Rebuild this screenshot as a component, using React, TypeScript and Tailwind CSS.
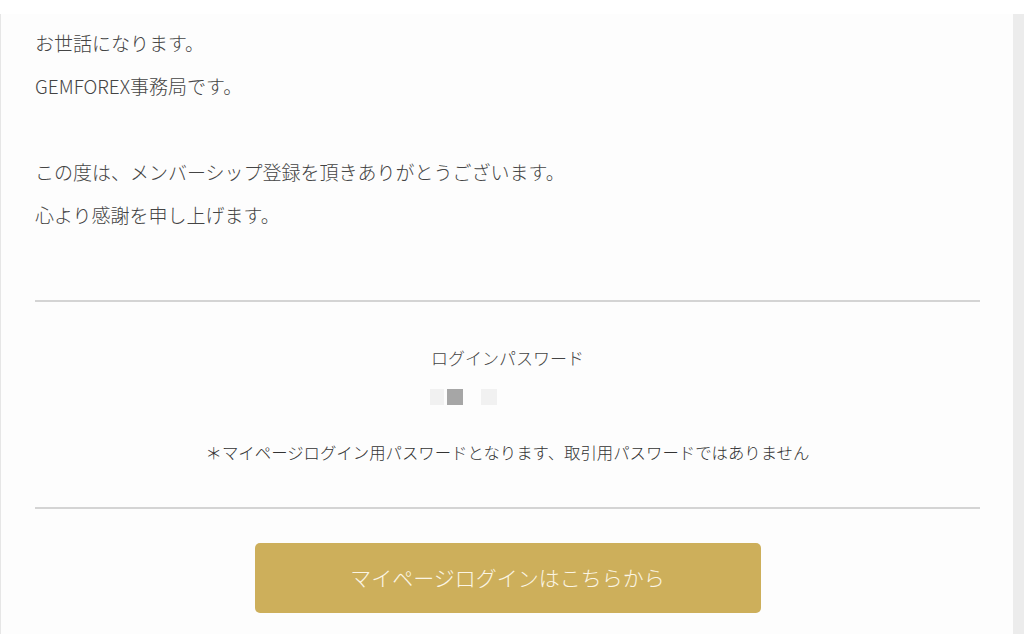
import React from "react";

const font = "font-['Noto_Sans_CJK_JP','Noto_Sans',sans-serif]";

const App: React.FC = () => {
  return (
    <div className={`flex h-[634px] w-full overflow-hidden bg-white pt-[14px] ${font}`}>
      <main className="flex-1 border-l border-[#e6e6e6] bg-[#fdfdfd] pl-[34px] pr-[33px] pt-[7px] text-[#444]">
        <div className="text-[19px] font-light leading-[43px]">
          <p>お世話になります。</p>
          <p>GEMFOREX事務局です。</p>
          <p className="h-[43px]"></p>
          <p>この度は、メンバーシップ登録を頂きありがとうございます。</p>
          <p>心より感謝を申し上げます。</p>
        </div>

        <hr className="mt-[64px] h-[2px] border-0 bg-[#d4d4d4]" />

        <div className="flex flex-col items-center">
          <p className="mt-[44px] text-[17px] font-light leading-[24px]">ログインパスワード</p>
          <div className="mt-[19px] flex w-[156px]">
            <span className="h-4 w-[14px] bg-[#f1f1f1]"></span>
            <span className="ml-[3px] h-4 w-4 bg-[#a6a6a6]"></span>
            <span className="ml-[18px] h-4 w-4 bg-[#f1f1f1]"></span>
          </div>
          <p className="mt-[35px] text-[16.4px] font-light leading-[24px] text-[#333]">
            ＊マイページログイン用パスワードとなります、取引用パスワードではありません
          </p>
        </div>

        <hr className="mt-[43px] h-[2px] border-0 bg-[#d4d4d4]" />

        <div className="mt-[34px] flex justify-center">
          <a
            href="#"
            className="flex h-[70px] w-[506px] items-center justify-center rounded-[5px] bg-[#cdaf5b] text-[21px] font-light text-[#fbf5e4]"
          >
            マイページログインはこちらから
          </a>
        </div>
      </main>
      <aside className="w-[11px] bg-[#ececec]"></aside>
    </div>
  );
};

export default App;
